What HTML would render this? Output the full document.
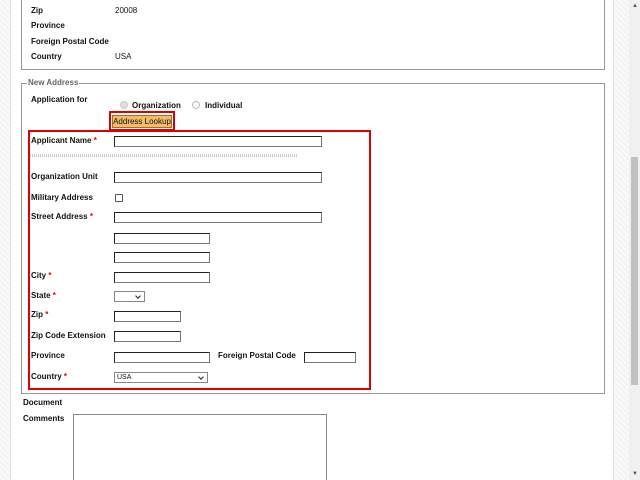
<!DOCTYPE html>
<html style="width:640px;height:480px;overflow:hidden"><head><style>
*{margin:0;padding:0;box-sizing:border-box}
body{width:640px;height:480px;overflow:hidden;background:#fff;position:relative;font-family:"Liberation Sans",sans-serif;font-size:8px;font-weight:bold;color:#111}
.a{position:absolute;white-space:nowrap}
.l{position:absolute;left:31px;line-height:10px}
.v{font-weight:normal}
.r{color:#e00}
.in{position:absolute;border:1px solid #777;border-top-color:#222;border-left-color:#222;background:#fff;height:11px}
.sel{position:absolute;border:1px solid #888;background:#fff;height:11px;font-weight:normal;font-size:7px;padding-left:2px;line-height:9px}
.sel:after{content:"";position:absolute;right:4px;top:2px;width:3px;height:3px;border-right:1.5px solid #222;border-bottom:1.5px solid #222;transform:rotate(45deg)}
</style></head><body>
<div class="a" style="left:0;top:0;width:11px;height:480px;background:repeating-linear-gradient(45deg,#f3f3f3 0 2px,#fafafa 2px 4px);border-right:1px solid #dce6f0"></div>
<div class="a" style="left:613px;top:0;width:16px;height:480px;background:repeating-linear-gradient(45deg,#f3f3f3 0 2px,#fafafa 2px 4px);border-left:1px solid #dce6f0"></div>
<div class="a" style="left:629px;top:0;width:11px;height:480px;background:#f0f0f0"></div>
<div class="a" style="left:631px;top:157px;width:7px;height:228px;background:#c1c1c1"></div>
<div class="a" style="left:632px;top:3px;font-size:6px;color:#555;font-weight:normal">▲</div>
<div class="a" style="left:632px;top:471px;font-size:6px;color:#555;font-weight:normal">▼</div>

<div class="a" style="left:21px;top:-2px;width:584px;height:72px;border:1px solid #999;border-top:none"></div>
<div class="l" style="top:6px">Zip</div><div class="a v" style="left:115px;top:6px">20008</div>
<div class="l" style="top:21px">Province</div>
<div class="l" style="top:37px">Foreign Postal Code</div>
<div class="l" style="top:52px">Country</div><div class="a v" style="left:115px;top:52px">USA</div>

<div class="a" style="left:21px;top:83px;width:584px;height:311px;border:1px solid #999"></div>
<div class="a" style="left:27px;top:78px;background:#fff;color:#666;padding:0 1px;line-height:10px">New Address</div>
<div class="l" style="top:95px">Application for</div>
<div class="a" style="left:120px;top:101px;width:8px;height:8px;border-radius:50%;background:#ddd;border:1px solid #ccc"></div>
<div class="a" style="left:132px;top:101px;line-height:10px">Organization</div>
<div class="a" style="left:192px;top:101px;width:8px;height:8px;border-radius:50%;border:1px solid #bbb;background:#fff"></div>
<div class="a" style="left:205px;top:101px;line-height:10px">Individual</div>
<div class="a" style="left:109px;top:111px;width:66px;height:20px;border:2px solid #d00"></div>
<div class="a" style="left:112px;top:115px;width:60px;height:13px;background:#f1bd68;border:1px solid #a07030;font-weight:normal;font-size:8px;line-height:11px;text-align:center">Address Lookup</div>

<div class="a" style="left:28px;top:130px;width:343px;height:260px;border:2px solid #d00"></div>
<div class="l" style="top:136px">Applicant Name <span class="r">*</span></div>
<div class="in" style="left:114px;top:136px;width:208px"></div>
<div class="a" style="left:30px;top:154px;width:268px;height:3px;background:repeating-linear-gradient(90deg,#ccc 0 1px,#fff 1px 2px)"></div>
<div class="l" style="top:172px">Organization Unit</div>
<div class="in" style="left:114px;top:172px;width:208px"></div>
<div class="l" style="top:193px">Military Address</div>
<div class="a" style="left:115px;top:194px;width:8px;height:8px;border:1px solid #555;border-radius:1px"></div>
<div class="l" style="top:212px">Street Address <span class="r">*</span></div>
<div class="in" style="left:114px;top:212px;width:208px"></div>
<div class="in" style="left:114px;top:233px;width:96px"></div>
<div class="in" style="left:114px;top:252px;width:96px"></div>
<div class="l" style="top:271px">City <span class="r">*</span></div>
<div class="in" style="left:114px;top:272px;width:96px"></div>
<div class="l" style="top:291px">State <span class="r">*</span></div>
<div class="sel" style="left:114px;top:291px;width:31px"></div>
<div class="l" style="top:310px">Zip <span class="r">*</span></div>
<div class="in" style="left:114px;top:311px;width:67px"></div>
<div class="l" style="top:331px">Zip Code Extension</div>
<div class="in" style="left:114px;top:331px;width:67px"></div>
<div class="l" style="top:351px">Province</div>
<div class="in" style="left:114px;top:352px;width:96px"></div>
<div class="a" style="left:218px;top:351px;line-height:10px">Foreign Postal Code</div>
<div class="in" style="left:304px;top:352px;width:52px"></div>
<div class="l" style="top:372px">Country <span class="r">*</span></div>
<div class="sel" style="left:114px;top:372px;width:94px">USA</div>

<div class="a" style="left:23px;top:398px;line-height:10px">Document</div>
<div class="a" style="left:23px;top:414px;line-height:10px">Comments</div>
<div class="a" style="left:73px;top:414px;width:254px;height:66px;border:1px solid #888;border-bottom:none"></div>
</body></html>
